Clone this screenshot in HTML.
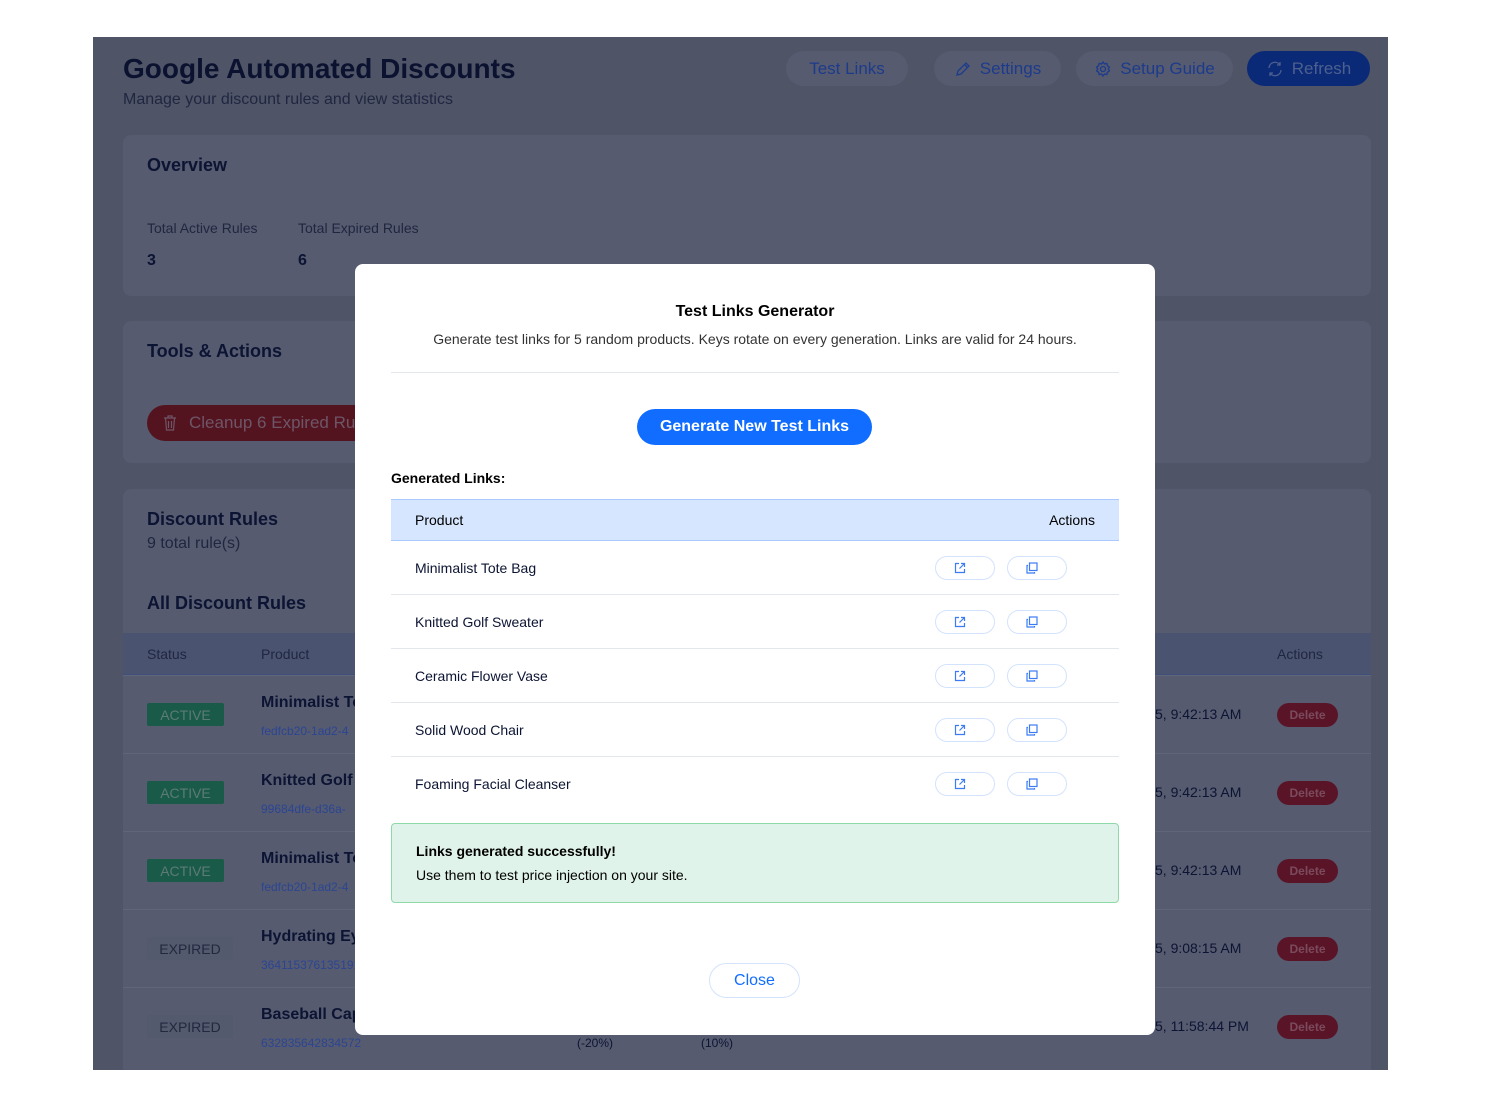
<!DOCTYPE html>
<html><head><meta charset="utf-8"><style>
*{box-sizing:border-box;margin:0;padding:0}
body{width:1489px;height:1117px;background:#fff;font-family:"Liberation Sans",sans-serif;position:relative;overflow:hidden;color:#0c1433}
.a{position:absolute;white-space:nowrap}
#bg{left:93px;top:37px;width:1295px;height:1033px;background:#4f5467;overflow:hidden}
.card{position:absolute;background:#565b6f;border-radius:8px}
.hb{position:absolute;height:35px;border-radius:18px;background:#565b6f;color:#1d3b8c;font-size:17px;display:flex;align-items:center;justify-content:center;gap:8px}
.tr{position:absolute;left:30px;width:1248px;height:78px;border-top:1px solid #60657a}
.badge{position:absolute;left:24px;top:27px;height:23px;font-size:14px;display:flex;align-items:center;justify-content:center;border-radius:2px}
.act{background:#1a5a48;color:#5c7b75;width:77px}
.exp{background:#545a6e;color:#22283d;width:86px}
.pn{position:absolute;left:138px;top:18px;font-weight:bold;font-size:16px;color:#0c1433}
.pid{position:absolute;left:138px;top:48px;font-size:12px;color:#2b4593}
.dt{position:absolute;left:1032px;top:30px;font-size:14px;color:#0c1433}
.del{position:absolute;left:1154px;top:27px;width:61px;height:24px;border-radius:12px;background:#5a1427;color:#7a4b5c;font-size:12px;font-weight:bold;display:flex;align-items:center;justify-content:center}
#modal{left:355px;top:264px;width:800px;height:771px;background:#fff;border-radius:8px}
.mr{position:absolute;left:36px;width:728px;height:54px;border-bottom:1px solid #e3e6ea;font-size:14px}
.mr span{position:absolute;left:24px;top:19px}
.ib{position:absolute;top:15px;width:60px;height:24px;border:1px solid #d3e3fd;border-radius:12px}
.ib svg{position:absolute;left:18px;top:5px}
</style></head><body>
<div id="bg" class="a">
 <div class="a" style="left:30px;top:16px;font-size:28px;font-weight:bold;color:#0b1230">Google Automated Discounts</div>
 <div class="a" style="left:30px;top:54px;font-size:16px;color:#1f2640">Manage your discount rules and view statistics</div>
 <div class="hb" style="left:693px;top:14px;width:122px">Test Links</div>
 <div class="hb" style="left:841px;top:14px;width:127px"><svg width="18" height="18" viewBox="0 0 18 18" fill="none" stroke="#1d3b8c" stroke-width="1.3"><path d="M3 15l1-4 8-8 3 3-8 8z M10.5 4.5l3 3"/></svg>Settings</div>
 <div class="hb" style="left:983px;top:14px;width:157px"><svg width="18" height="18" viewBox="0 0 18 18" fill="none" stroke="#1d3b8c" stroke-width="1.3"><circle cx="9" cy="9" r="2.5"/><path d="M9 2l1.5 2 2.3-.6.6 2.3 2 1.5-1.2 1.8 1.2 1.8-2 1.5-.6 2.3-2.3-.6L9 16l-1.5-2-2.3.6-.6-2.3-2-1.5L3.8 9 2.6 7.2l2-1.5.6-2.3 2.3.6z"/></svg>Setup Guide</div>
 <div class="hb" style="left:1154px;top:14px;width:123px;background:#0a2a78;color:#4d5f8e"><svg width="18" height="18" viewBox="0 0 18 18" fill="none" stroke="#4d5f8e" stroke-width="1.3"><path d="M3 8a6 6 0 0 1 11-3M15 10a6 6 0 0 1-11 3M14 2v3h-3M4 16v-3h3"/></svg>Refresh</div>
 <div class="card" style="left:30px;top:98px;width:1248px;height:161px">
  <div class="a" style="left:24px;top:20px;font-size:18px;font-weight:bold">Overview</div>
  <div class="a" style="left:24px;top:85px;font-size:14px;color:#1f2640">Total Active Rules</div>
  <div class="a" style="left:175px;top:85px;font-size:14px;color:#1f2640">Total Expired Rules</div>
  <div class="a" style="left:24px;top:117px;font-size:16px;font-weight:bold">3</div>
  <div class="a" style="left:175px;top:117px;font-size:16px;font-weight:bold">6</div>
 </div>
 <div class="card" style="left:30px;top:284px;width:1248px;height:142px">
  <div class="a" style="left:24px;top:20px;font-size:18px;font-weight:bold">Tools &amp; Actions</div>
  <div class="a" style="left:24px;top:84px;width:260px;height:36px;border-radius:18px;background:#54141f;color:#6e5568;font-size:17px;padding-left:42px;line-height:36px">Cleanup 6 Expired Rules<svg style="position:absolute;left:16px;top:9px" width="14" height="18" viewBox="0 0 14 18" fill="none" stroke="#6e5568" stroke-width="1.2"><path d="M1 4h12M5 4V2h4v2M2.5 4l1 12h7l1-12M5.5 7v7M8.5 7v7"/></svg></div>
 </div>
 <div class="card" style="left:30px;top:452px;width:1248px;height:620px">
  <div class="a" style="left:24px;top:20px;font-size:18px;font-weight:bold">Discount Rules</div>
  <div class="a" style="left:24px;top:46px;font-size:16px;color:#1f2640">9 total rule(s)</div>
  <div class="a" style="left:24px;top:104px;font-size:18px;font-weight:bold">All Discount Rules</div>
 </div>
 <div class="a" style="left:30px;top:596px;width:1248px;height:42px;background:#4a5370;border-bottom:1px solid #3f4f7a">
  <div class="a" style="left:24px;top:13px;font-size:14px;color:#1f2640">Status</div>
  <div class="a" style="left:138px;top:13px;font-size:14px;color:#1f2640">Product</div>
  <div class="a" style="left:1154px;top:13px;font-size:14px;color:#1f2640">Actions</div>
 </div>
 <div class="tr" style="top:638px"><div class="badge act">ACTIVE</div><div class="pn">Minimalist Tote Bag</div><div class="pid">fedfcb20-1ad2-4</div><div class="dt">5, 9:42:13 AM</div><div class="del">Delete</div></div>
 <div class="tr" style="top:716px"><div class="badge act">ACTIVE</div><div class="pn">Knitted Golf</div><div class="pid">99684dfe-d36a-</div><div class="dt">5, 9:42:13 AM</div><div class="del">Delete</div></div>
 <div class="tr" style="top:794px"><div class="badge act">ACTIVE</div><div class="pn">Minimalist Tote</div><div class="pid">fedfcb20-1ad2-4</div><div class="dt">5, 9:42:13 AM</div><div class="del">Delete</div></div>
 <div class="tr" style="top:872px"><div class="badge exp">EXPIRED</div><div class="pn">Hydrating Eye</div><div class="pid">364115376135191</div><div class="dt">5, 9:08:15 AM</div><div class="del">Delete</div></div>
 <div class="tr" style="top:950px"><div class="badge exp">EXPIRED</div><div class="pn">Baseball Cap</div><div class="pid">632835642834572</div><div class="a" style="left:454px;top:48px;font-size:12px">(-20%)</div><div class="a" style="left:578px;top:48px;font-size:12px">(10%)</div><div class="dt">5, 11:58:44 PM</div><div class="del">Delete</div></div>
</div>

<div id="modal" class="a">
 <div class="a" style="left:0;width:800px;top:39px;text-align:center;font-size:16px;font-weight:bold;color:#000">Test Links Generator</div>
 <div class="a" style="left:0;width:800px;top:67px;text-align:center;font-size:14px;color:#333">Generate test links for 5 random products. Keys rotate on every generation. Links are valid for 24 hours.</div>
 <div class="a" style="left:36px;top:108px;width:728px;height:1px;background:#e3e6ea"></div>
 <div class="a" style="left:282px;top:145px;width:235px;height:36px;border-radius:18px;background:#116dff;color:#fff;font-size:16px;font-weight:bold;text-align:center;line-height:36px">Generate New Test Links</div>
 <div class="a" style="left:36px;top:206px;font-size:14px;font-weight:bold;color:#000">Generated Links:</div>
 <div class="a" style="left:36px;top:235px;width:728px;height:42px;background:#d6e6fe;border-top:1px solid #a8caff;border-bottom:1px solid #a8caff;font-size:14px;color:#000">
  <div class="a" style="left:24px;top:12px">Product</div><div class="a" style="right:24px;top:12px">Actions</div>
 </div>
 <div class="mr" style="top:277px"><span>Minimalist Tote Bag</span></div>
 <div class="mr" style="top:331px"><span>Knitted Golf Sweater</span></div>
 <div class="mr" style="top:385px"><span>Ceramic Flower Vase</span></div>
 <div class="mr" style="top:439px"><span>Solid Wood Chair</span></div>
 <div class="mr" style="top:493px;border-bottom:none"><span>Foaming Facial Cleanser</span></div>
 <div class="a" style="left:36px;top:559px;width:728px;height:80px;background:#e0f3ea;border:1px solid #8fd9a8;border-radius:4px;color:#000">
  <div class="a" style="left:24px;top:19px;font-size:14px;font-weight:bold">Links generated successfully!</div>
  <div class="a" style="left:24px;top:43px;font-size:14px">Use them to test price injection on your site.</div>
 </div>
 <div class="a" style="left:354px;top:699px;width:91px;height:35px;border:1px solid #d3e3fd;border-radius:18px;color:#116dff;font-size:16px;text-align:center;line-height:33px">Close</div>
</div>
<div id="icons"></div>
<script>
var h='';[541,595,649,703,757].forEach(function(y){
h+='<div class="ib a" style="left:935px;top:'+(y+15)+'px"><svg width="12" height="12" viewBox="0 0 12 12" fill="none" stroke="#3b7cf5" stroke-width="1.2"><path d="M5 1.5H1.5v9h9V7M7 1.5h3.5V5M10.5 1.5L5.5 6.5"/></svg></div>';
h+='<div class="ib a" style="left:1007px;top:'+(y+15)+'px"><svg width="12" height="12" viewBox="0 0 12 12" fill="none" stroke="#3b7cf5" stroke-width="1.2"><rect x="3.5" y="1" width="7.5" height="7.5"/><path d="M2 3.5H1v7.5h7.5V10"/></svg></div>';});
document.getElementById('icons').innerHTML=h;
</script>
</body></html>
